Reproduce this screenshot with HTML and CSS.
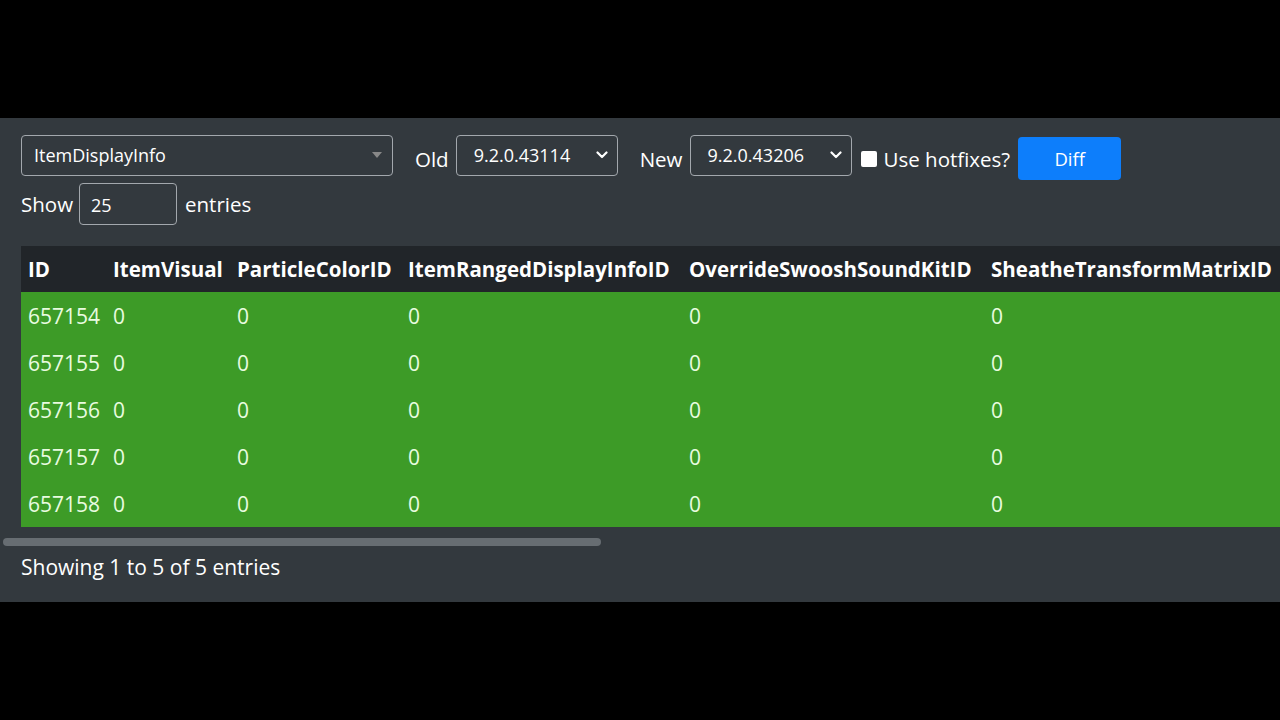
FILE: index.html
```html
<!DOCTYPE html>
<html lang="en">
<head>
  <meta charset="UTF-8">
  <title>DBC Diff</title>
  <link rel="stylesheet" href="styles.css">
</head>
<body>
  <div class="letterbox"></div>
  <div class="panel">
    <div class="controls">
      <div class="select table-select">
        <span>ItemDisplayInfo</span>
        <svg class="caret" width="10" height="6" viewBox="0 0 10 6"><path d="M0 0 L10 0 L5 6 Z" fill="#888"/></svg>
      </div>
      <label class="label old-label">Old</label>
      <div class="select build-select">
        <span>9.2.0.43114</span>
        <svg class="chevron" width="12" height="8" viewBox="0 0 12 8"><path d="M1.5 1.5 L6 6 L10.5 1.5" fill="none" stroke="#fff" stroke-width="2.2" stroke-linecap="round" stroke-linejoin="round"/></svg>
      </div>
      <label class="label new-label">New</label>
      <div class="select build-select">
        <span>9.2.0.43206</span>
        <svg class="chevron" width="12" height="8" viewBox="0 0 12 8"><path d="M1.5 1.5 L6 6 L10.5 1.5" fill="none" stroke="#fff" stroke-width="2.2" stroke-linecap="round" stroke-linejoin="round"/></svg>
      </div>
      <span class="checkbox"></span>
      <label class="label hotfix-label">Use hotfixes?</label>
      <button class="diff-btn">Diff</button>
    </div>
    <div class="length">
      <span>Show</span>
      <div class="length-input">25</div>
      <span>entries</span>
    </div>
    <div class="table-wrap">
      <table class="diff-table">
        <colgroup>
          <col style="width: 85px">
          <col style="width: 124px">
          <col style="width: 171px">
          <col style="width: 281px">
          <col style="width: 302px">
          <col style="width: 320px">
        </colgroup>
        <thead>
          <tr>
            <th>ID</th>
            <th>ItemVisual</th>
            <th>ParticleColorID</th>
            <th>ItemRangedDisplayInfoID</th>
            <th>OverrideSwooshSoundKitID</th>
            <th>SheatheTransformMatrixID</th>
          </tr>
        </thead>
        <tbody>
          <tr class="added"><td>657154</td><td>0</td><td>0</td><td>0</td><td>0</td><td>0</td></tr>
          <tr class="added"><td>657155</td><td>0</td><td>0</td><td>0</td><td>0</td><td>0</td></tr>
          <tr class="added"><td>657156</td><td>0</td><td>0</td><td>0</td><td>0</td><td>0</td></tr>
          <tr class="added"><td>657157</td><td>0</td><td>0</td><td>0</td><td>0</td><td>0</td></tr>
          <tr class="added"><td>657158</td><td>0</td><td>0</td><td>0</td><td>0</td><td>0</td></tr>
        </tbody>
      </table>
    </div>
    <div class="scrollbar"><div class="scroll-thumb"></div></div>
    <div class="info">Showing 1 to 5 of 5 entries</div>
  </div>
  <div class="letterbox"></div>
</body>
</html>
```

FILE: styles.css
```css
body {
  margin: 0;
  background-color: #000;
  font-family: 'Open Sans', 'Noto Sans', sans-serif;
  color: #fff;
  overflow: hidden;
}

.letterbox {
  height: 118px;
  background-color: #000;
}

.panel {
  height: 484px;
  background-color: #33393e;
  padding: 16px 0 0 21px;
  box-sizing: border-box;
  overflow: hidden;
}

.controls {
  display: flex;
  align-items: center;
  height: 42px;
}

.select {
  display: flex;
  align-items: center;
  justify-content: space-between;
  height: 41px;
  box-sizing: border-box;
  border: 1px solid #a3a8ad;
  border-radius: 4px;
  font-size: 18px;
  color: #fff;
}

.table-select {
  width: 372px;
  padding: 0 10px 0 12px;
}

.build-select {
  width: 162px;
  padding: 0 9px 0 17px;
}

.label {
  font-size: 20.5px;
  margin-top: 8px;
}

.old-label {
  margin-left: 22px;
  margin-right: 7px;
}

.new-label {
  margin-left: 22px;
  margin-right: 7px;
}

.checkbox {
  width: 16px;
  height: 16px;
  background: #fff;
  border-radius: 2px;
  margin: 8px 7px 0 9px;
}

.hotfix-label {
  margin-right: 8px;
}

.diff-btn {
  width: 103px;
  height: 43px;
  margin-top: 6px;
  background-color: #0d7efb;
  border: none;
  border-radius: 4px;
  color: #fff;
  font-family: inherit;
  font-size: 18.5px;
}

.length {
  display: flex;
  align-items: center;
  margin-top: 7px;
  font-size: 20.5px;
}

.length-input {
  width: 98px;
  height: 42px;
  box-sizing: border-box;
  border: 1px solid #a3a8ad;
  border-radius: 4px;
  margin: 0 8px 0 6px;
  padding: 9px 0 0 11px;
  font-size: 18px;
}

.table-wrap {
  margin-top: 21px;
  overflow: hidden;
}

.diff-table {
  border-collapse: collapse;
  table-layout: fixed;
  width: 1283px;
  font-size: 21px;
  white-space: nowrap;
}

.diff-table th {
  background-color: #212529;
  height: 46px;
  text-align: left;
  padding: 0 7px;
  font-weight: 700;
  font-size: 20.5px;
}

.diff-table td {
  height: 47px;
  padding: 0 7px;
  color: #e9fbe0;
}

.added {
  background-color: #3d9b27;
}

.scrollbar {
  margin: 11px 0 0 -18px;
  width: 598px;
  height: 8px;
}

.scroll-thumb {
  height: 8px;
  border-radius: 4px;
  background-color: #676d72;
}

.info {
  margin-top: 7px;
  font-size: 21px;
}
```
